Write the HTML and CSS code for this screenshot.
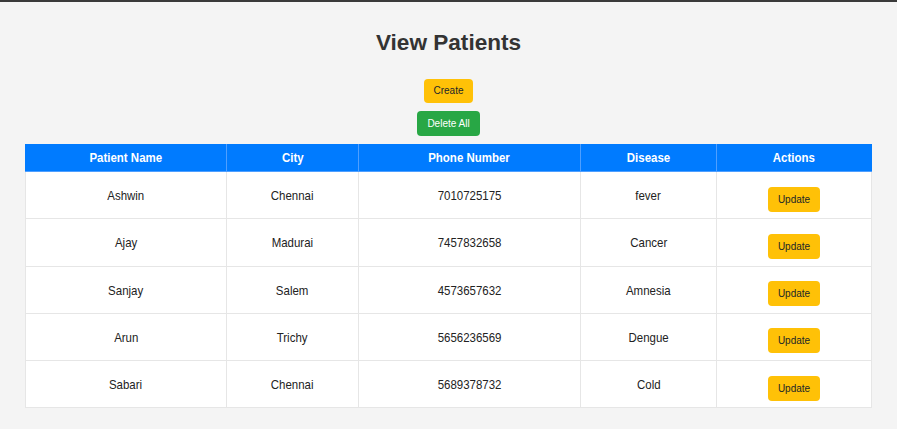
FILE: index.html
```
<!DOCTYPE html>
<html>
<head>
<meta charset="utf-8">
<title>View Patients</title>
<link rel="stylesheet" href="styles.css">
</head>
<body>
<div class="page">
  <h1 class="title">View Patients</h1>
  <div class="toolbar">
    <button class="btn btn-warning">Create</button>
    <button class="btn btn-success">Delete All</button>
  </div>
  <table class="patients">
    <colgroup>
      <col class="c1"><col class="c2"><col class="c3"><col class="c4"><col class="c5">
    </colgroup>
    <thead>
      <tr><th><span class="tx">Patient Name</span></th><th><span class="tx">City</span></th><th><span class="tx">Phone Number</span></th><th><span class="tx">Disease</span></th><th><span class="tx">Actions</span></th></tr>
    </thead>
    <tbody>
      <tr><td><span class="tx">Ashwin</span></td><td><span class="tx">Chennai</span></td><td><span class="tx">7010725175</span></td><td><span class="tx">fever</span></td><td class="act"><button class="btn btn-warning">Update</button></td></tr>
      <tr><td><span class="tx">Ajay</span></td><td><span class="tx">Madurai</span></td><td><span class="tx">7457832658</span></td><td><span class="tx">Cancer</span></td><td class="act"><button class="btn btn-warning">Update</button></td></tr>
      <tr><td><span class="tx">Sanjay</span></td><td><span class="tx">Salem</span></td><td><span class="tx">4573657632</span></td><td><span class="tx">Amnesia</span></td><td class="act"><button class="btn btn-warning">Update</button></td></tr>
      <tr><td><span class="tx">Arun</span></td><td><span class="tx">Trichy</span></td><td><span class="tx">5656236569</span></td><td><span class="tx">Dengue</span></td><td class="act"><button class="btn btn-warning">Update</button></td></tr>
      <tr><td><span class="tx">Sabari</span></td><td><span class="tx">Chennai</span></td><td><span class="tx">5689378732</span></td><td><span class="tx">Cold</span></td><td class="act"><button class="btn btn-warning">Update</button></td></tr>
    </tbody>
  </table>
</div>
</body>
</html>
```
FILE: styles.css
```
html, body {
  margin: 0;
  padding: 0;
}
body {
  background: #f4f4f4;
  border-top: 2px solid #3a3a3a;
  font-family: "Liberation Sans", Arial, sans-serif;
  color: #222;
  min-height: 427px;
}
.page {
  padding: 28px 25px 0 25px;
}
.title {
  margin: 0;
  text-align: center;
  font-size: 22.6px;
  font-weight: bold;
  color: #333;
  line-height: 25.7px;
}
.toolbar {
  display: flex;
  flex-direction: column;
  align-items: center;
  gap: 8px;
  margin-top: 23.5px;
  margin-bottom: 8px;
}
.btn {
  font-family: "Liberation Sans", Arial, sans-serif;
  font-size: 10px;
  line-height: 12px;
  padding: 6px 9.5px;
  border: none;
  border-radius: 4px;
  cursor: pointer;
}
.btn-warning {
  background: #ffc107;
  color: #212529;
}
.btn-success {
  background: #28a745;
  color: #fff;
  padding: 6.5px 10px;
}
.patients {
  width: 100%;
  border-collapse: collapse;
  table-layout: fixed;
  background: #fff;
  font-size: 13.5px;
}
.c1 { width: 201px; }
.c2 { width: 132px; }
.c3 { width: 222px; }
.c4 { width: 136px; }
.c5 { width: 155px; }
.tx {
  display: inline-block;
  transform: scaleX(0.85);
}
.patients th {
  background: #007bff;
  color: #fff;
  font-weight: bold;
  padding: 5px 4px;
  line-height: 16px;
  border: 1px solid #4f9fff;
  border-top-color: #007bff;
  text-align: center;
}
.patients th:first-child { border-left-color: #007bff; }
.patients th:last-child { border-right-color: #007bff; }
.patients td {
  padding: 16px 4px 14.25px;
  line-height: 16px;
  border: 1px solid #e6e6e6;
  text-align: center;
  vertical-align: middle;
}
.patients td.act {
  vertical-align: top;
  padding-top: 14.5px;
  padding-bottom: 0;
}
.patients td.act .btn {
  padding: 6px 9.5px;
  line-height: 13px;
}
```
